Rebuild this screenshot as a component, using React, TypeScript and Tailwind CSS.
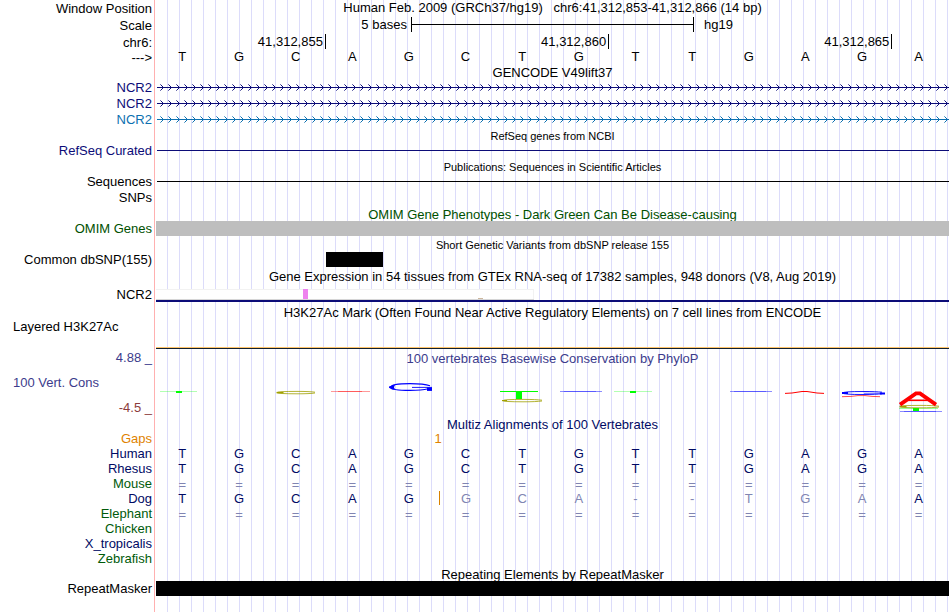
import React from "react";
import clsx from "clsx";

interface RowProps {
  label?: React.ReactNode;
  labelClass?: string;
  height: string;
  children?: React.ReactNode;
}

// One line of the browser: label on the left, track data on the right
const Row: React.FC<RowProps> = ({ label, labelClass = "", height, children }) => (
  <div className={clsx("flex", height)}>
    <div className={clsx("w-[156px] shrink-0 pr-1 flex items-center justify-end whitespace-nowrap", labelClass)}>
      {label}
    </div>
    <div className="flex-1 min-w-0">{children}</div>
  </div>
);

interface TitleProps {
  small?: boolean;
  className?: string;
  children: React.ReactNode;
}

const Title: React.FC<TitleProps> = ({ small = false, className = "", children }) => (
  <div className={clsx("h-full flex items-end justify-center whitespace-pre", className)}>
    <span className={small ? "text-[11px] leading-[12px]" : "leading-[13px]"}>{children}</span>
  </div>
);

interface BasesProps {
  sequence: string;
  className?: string;
  mismatchFrom?: number;
  mismatchTo?: number;
}

const Bases: React.FC<BasesProps> = ({ sequence, className = "", mismatchFrom = 99, mismatchTo = 99 }) => (
  <div className={clsx("grid grid-cols-14 text-center", className)}>
    {sequence.split("").map((base, i) => (
      <span
        key={i}
        className={clsx(
          "pr-1",
          (base === "=" || (i >= mismatchFrom && i <= mismatchTo)) && "text-[#8085b2]",
          i === mismatchFrom && "border-l border-[#d88200] h-[14px]"
        )}
      >
        {base}
      </span>
    ))}
  </div>
);

// Intron line with strand arrows
const GeneLine: React.FC<{ id: string }> = ({ id }) => (
  <svg className="block w-full h-4" shapeRendering="crispEdges">
    <defs>
      <pattern id={id} x="0" y="0" width="8" height="16" patternUnits="userSpaceOnUse">
        <path d="M5 6h1v1h-1zM6 7h1v1h-1zM6 9h1v1h-1zM5 10h1v1h-1z" fill="currentColor" />
        <path d="M4 5h1v1h-1zM4 11h1v1h-1z" fill="currentColor" opacity="0.6" />
      </pattern>
    </defs>
    <rect x="1" y="8" width="100%" height="1" fill="currentColor" />
    <rect width="100%" height="16" fill={`url(#${id})`} />
  </svg>
);

const PositionTick: React.FC<{ children: React.ReactNode }> = ({ children }) => (
  <span className="h-[15px] border-r border-black pr-0.5 text-right leading-[15px]">{children}</span>
);

const GtexGraph = () => (
  <svg className="block w-[378px] h-[11px]" shapeRendering="crispEdges">
    <rect width="378" height="11" fill="#f2f2f2" />
    <rect y="1" width="377" height="9" fill="#ffffff" />
    <rect y="10" width="378" height="1" fill="#d6d6d6" />
    <rect x="147" width="5" height="10" fill="#ee82ee" />
    <rect x="322" y="9" width="5" height="1" fill="#cdb79e" />
  </svg>
);

const ConservationLogo = () => (
  <svg className="block w-full h-[52px]" viewBox="0 0 793 52" preserveAspectRatio="none" fill="none">
    <g fill="#00ff00" shapeRendering="crispEdges">
      <rect x="4" y="26" width="37" height="1" opacity="0.3" />
      <rect x="20" y="26" width="6" height="2" />
      <rect x="344" y="26" width="38" height="1" />
      <rect x="360" y="26" width="6" height="8" />
      <rect x="458" y="26" width="38" height="1" opacity="0.3" />
      <rect x="474" y="26" width="6" height="2" />
      <rect x="743" y="43" width="39" height="1" opacity="0.4" />
      <rect x="757" y="43" width="6" height="3" />
    </g>
    <g stroke="#a0a000" strokeWidth="0.8">
      <path d="M159 27.2Q154 26.4 141 26.4Q121 26.4 121 27.6Q121 28.8 141 28.8Q154 28.8 159 28" />
      <path d="M120.5 27.6h7" strokeWidth="1.4" />
      <path d="M386 35.2Q380 34.4 367 34.4Q347 34.4 347 35.6Q347 36.8 367 36.8Q380 36.8 386 36" />
      <path d="M346 35.6h5" strokeWidth="1.2" />
      <path d="M783 41.2Q778 40.4 764 40.4Q744 40.4 744 41.6Q744 42.8 764 42.8Q778 42.8 783 42" />
      <path d="M743.5 41.6h7" strokeWidth="1.6" />
    </g>
    <g stroke="#0000ff">
      <path d="M274 20.7Q268 18.6 254 18.6Q235 18.6 235 22.2Q235 25.4 254 25.4Q266 25.4 272 23.8" strokeWidth="1.1" />
      <path d="M236 20.4L233 21.4V22.8L236 24.4L239 24.8L238 22.2L239 19.8Z" fill="#0000ff" stroke="none" />
      <path d="M256 22.4h20" strokeWidth="0.9" />
      <path d="M271 24.2h5" strokeWidth="3.4" />
      <path d="M404 26.5h42M574 26.5h42M744 46.5h42" strokeWidth="1" opacity="0.45" />
      <path d="M408 26.5h32M578 26.5h32M748 46.5h32" strokeWidth="1" opacity="0.35" />
      <path d="M726 27.2Q720 26.5 707 26.5Q687 26.5 687 28Q687 29.5 707 29.5Q720 29.5 726 28.8" strokeWidth="0.9" />
      <path d="M686 28h6M724 28.6h5" strokeWidth="2" />
      <path d="M708 28.3h18" strokeWidth="0.6" />
    </g>
    <g stroke="#ff0000">
      <path d="M175 26.5h39" opacity="0.4" />
      <path d="M182 26.5h24" opacity="0.4" />
      <path d="M629 28.4L636 28L646 26.5H651L661 28L668 28.4" />
      <path d="M686 31.7L695 31.4L702 30.6H709L716 31.4L724 31.7" strokeWidth="0.7" />
      <path d="M744 39.6L760 28.4H764L780 39.6" strokeWidth="3.8" />
      <path d="M752 35.3h21" strokeWidth="1.6" />
    </g>
  </svg>
);

const alignments = [
  { name: "Human", color: "text-[#000a64]", sequence: "TGCAGCTGTTGAGA" },
  { name: "Rhesus", color: "text-[#000a64]", sequence: "TGCAGCTGTTGAGA" },
  { name: "Mouse", color: "text-[#005a0a]", sequence: "==============", className: "leading-[17px]" },
  { name: "Dog", color: "text-[#000a64]", sequence: "TGCAGGCA--TGAA", mismatchFrom: 5, mismatchTo: 12 },
  { name: "Elephant", color: "text-[#005a0a]", sequence: "==============", className: "leading-[17px]" },
  { name: "Chicken", color: "text-[#005a0a]", sequence: "" },
  { name: "X_tropicalis", color: "text-[#000a64]", sequence: "" },
  { name: "Zebrafish", color: "text-[#005a0a]", sequence: "" },
];

const transcripts = [
  { id: "ncr2-a", color: "text-[#0c0c78]" },
  { id: "ncr2-b", color: "text-[#0c0c78]" },
  { id: "ncr2-c", color: "text-[#0c70b0]" },
];

export default function App() {
  return (
    <main className="bg-white bg-[linear-gradient(to_right,transparent_11px,#dcdcfa_11px)] bg-[length:12px_100%] font-['Liberation_Sans',Arial,sans-serif] text-[13px] leading-[15px] text-black">
      <div className="min-h-screen pr-px bg-[linear-gradient(to_right,#fff_154px,#ffb0b0_154px,#ffb0b0_155px,#fff_155px,#fff_156px,transparent_156px)]">
        {/* Ruler */}
        <Row label="Window Position" height="h-4">
          <Title className="max-h-[14px]">Human Feb. 2009 (GRCh37/hg19)   chr6:41,312,853-41,312,866 (14 bp)</Title>
        </Row>
        <Row label="Scale" height="h-[18px]">
          <div className="h-full grid grid-cols-[9fr_10fr_9fr] leading-[17px]">
            <span className="text-right pr-1">5 bases</span>
            <div className="mt-px h-[15px] border-x border-black flex items-center">
              <div className="h-px w-full bg-black" />
            </div>
            <span className="pl-2.5">hg19</span>
          </div>
        </Row>
        <Row label="chr6:" height="h-4">
          <div className="grid grid-cols-[3fr_5fr_5fr_1fr]">
            <PositionTick>41,312,855</PositionTick>
            <PositionTick>41,312,860</PositionTick>
            <PositionTick>41,312,865</PositionTick>
          </div>
        </Row>
        <Row label="--->" height="h-[15px]">
          <Bases sequence="TGCAGCTGTTGAGA" className="leading-[14px]" />
        </Row>

        {/* Genes */}
        <Row height="h-[14px]">
          <Title>GENCODE V49lift37</Title>
        </Row>
        {transcripts.map((t) => (
          <div key={t.id} className={t.color}>
            <Row label="NCR2" height="h-4">
              <GeneLine id={t.id} />
            </Row>
          </div>
        ))}
        <Row height="h-[15px]">
          <Title small>RefSeq genes from NCBI</Title>
        </Row>
        <Row label="RefSeq Curated" labelClass="text-[#0c0c78]" height="h-4">
          <div className="mt-2 ml-px h-px bg-[#0c0c78]" />
        </Row>
        <Row height="h-[15px]">
          <Title small>Publications: Sequences in Scientific Articles</Title>
        </Row>
        <Row label="Sequences" height="h-4">
          <div className="mt-2 ml-px h-px bg-black" />
        </Row>
        <Row label="SNPs" height="h-4" />

        {/* Phenotype and variation */}
        <Row height="h-4">
          <Title className="text-[#005000]">OMIM Gene Phenotypes - Dark Green Can Be Disease-causing</Title>
        </Row>
        <Row label="OMIM Genes" labelClass="text-[#005000]" height="h-[15px]">
          <div className="h-full bg-[#bebebe]" />
        </Row>
        <Row height="h-4">
          <Title small className="max-h-[15px]">Short Genetic Variants from dbSNP release 155</Title>
        </Row>
        <Row label="Common dbSNP(155)" height="h-[15px]">
          <div className="h-full grid grid-cols-[3fr_1fr_10fr]">
            <div className="col-start-2 bg-black" />
          </div>
        </Row>

        {/* Expression and regulation */}
        <Row height="h-4">
          <Title>Gene Expression in 54 tissues from GTEx RNA-seq of 17382 samples, 948 donors (V8, Aug 2019)</Title>
        </Row>
        <Row label="NCR2" labelClass="pt-0.5" height="h-5">
          <div className="pt-1.5">
            <GtexGraph />
            <div className="h-0.5 bg-[#0c0c78]" />
          </div>
        </Row>
        <Row height="h-4">
          <Title>H3K27Ac Mark (Often Found Near Active Regulatory Elements) on 7 cell lines from ENCODE</Title>
        </Row>
        <div className="h-[30px] flex">
          <div className="w-[156px] shrink-0 pl-[13px]">Layered H3K27Ac</div>
          <div className="flex-1 flex flex-col justify-end">
            <div className="h-px bg-[#ffc46a]" />
            <div className="h-px bg-[#102030]" />
          </div>
        </div>

        {/* Conservation */}
        <Row label="4.88 _" labelClass="text-[#3c3c8c]" height="h-4">
          <Title className="text-[#3c3c8c]">100 vertebrates Basewise Conservation by PhyloP</Title>
        </Row>
        <div className="flex h-[52px]">
          <div className="w-[156px] shrink-0 flex flex-col gap-2.5 pt-2.5 pl-[13px] pr-1">
            <span className="text-[#3c3c8c]">100 Vert. Cons</span>
            <span className="text-right text-[#8c3c3c]">-4.5 _</span>
          </div>
          <div className="flex-1">
            <ConservationLogo />
          </div>
        </div>
        <Row height="h-[14px]">
          <Title className="text-[#000a64]">Multiz Alignments of 100 Vertebrates</Title>
        </Row>
        <Row label="Gaps" labelClass="text-[#e08200]" height="h-[15px]">
          <div className="grid grid-cols-[9fr_2fr_17fr] text-center text-[#e08200]">
            <span className="col-start-2 pr-0.5">1</span>
          </div>
        </Row>
        {alignments.map(({ name, color, ...bases }) => (
          <div key={name} className={color}>
            <Row label={name} height="h-[15px]">
              <Bases {...bases} />
            </Row>
          </div>
        ))}

        {/* Repeats */}
        <Row height="h-[15px]">
          <Title>Repeating Elements by RepeatMasker</Title>
        </Row>
        <Row label="RepeatMasker" height="h-[15px]">
          <div className="h-full bg-black" />
        </Row>
      </div>
    </main>
  );
}
